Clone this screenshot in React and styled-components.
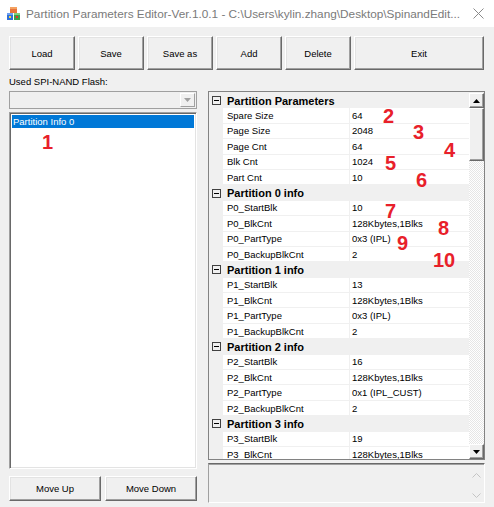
import React from "react";
import styled, { createGlobalStyle } from "styled-components";

const GlobalStyle = createGlobalStyle`
  html, body { margin: 0; padding: 0; background: #f0f0f0; }
  body { font-family: "Liberation Sans", Arial, sans-serif; }
  * { box-sizing: border-box; }
`;

const sections = [
  {
    title: "Partition Parameters",
    items: [
      ["Spare Size", "64"],
      ["Page Size", "2048"],
      ["Page Cnt", "64"],
      ["Blk Cnt", "1024"],
      ["Part Cnt", "10"],
    ],
  },
  {
    title: "Partition 0 info",
    items: [
      ["P0_StartBlk", "10"],
      ["P0_BlkCnt", "128Kbytes,1Blks"],
      ["P0_PartType", "0x3 (IPL)"],
      ["P0_BackupBlkCnt", "2"],
    ],
  },
  {
    title: "Partition 1 info",
    items: [
      ["P1_StartBlk", "13"],
      ["P1_BlkCnt", "128Kbytes,1Blks"],
      ["P1_PartType", "0x3 (IPL)"],
      ["P1_BackupBlkCnt", "2"],
    ],
  },
  {
    title: "Partition 2 info",
    items: [
      ["P2_StartBlk", "16"],
      ["P2_BlkCnt", "128Kbytes,1Blks"],
      ["P2_PartType", "0x1 (IPL_CUST)"],
      ["P2_BackupBlkCnt", "2"],
    ],
  },
  {
    title: "Partition 3 info",
    items: [
      ["P3_StartBlk", "19"],
      ["P3_BlkCnt", "128Kbytes,1Blks"],
    ],
  },
];

const marks = [
  { n: "1", x: 42, y: 135 },
  { n: "2", x: 383, y: 109 },
  { n: "3", x: 413, y: 125 },
  { n: "4", x: 444, y: 143 },
  { n: "5", x: 385, y: 156 },
  { n: "6", x: 416, y: 173 },
  { n: "7", x: 385, y: 204 },
  { n: "8", x: 438, y: 221 },
  { n: "9", x: 397, y: 236 },
  { n: "10", x: 433, y: 253 },
];

function App() {
  return (
    <Window>
      <GlobalStyle />
      <TitleBar>
        <svg width="15" height="15" viewBox="0 0 15 15">
          <rect x="4" y="1" width="7" height="6" fill="#e8743b" />
          <rect x="4" y="1" width="7" height="2" fill="#f4a261" />
          <rect x="1" y="7" width="6" height="7" fill="#2f6fd6" />
          <rect x="1" y="7" width="6" height="2" fill="#6fa0f0" />
          <rect x="8" y="7" width="6" height="7" fill="#3aa04a" />
          <rect x="8" y="7" width="6" height="2" fill="#7fd07f" />
          <rect x="3" y="10" width="2" height="2" fill="#f5d33b" />
          <rect x="10" y="10" width="2" height="2" fill="#e03030" />
        </svg>
        <TitleText>
          Partition Parameters Editor-Ver.1.0.1 - C:\Users\kylin.zhang\Desktop\SpinandEdit...
        </TitleText>
        <svg width="11" height="11" viewBox="0 0 11 11">
          <path d="M0.5 0.5 L10.5 10.5 M10.5 0.5 L0.5 10.5" stroke="#8a8a8a" strokeWidth="1" />
        </svg>
      </TitleBar>

      <Toolbar>
        <Button>Load</Button>
        <Button>Save</Button>
        <Button>Save as</Button>
        <Button>Add</Button>
        <Button>Delete</Button>
        <Button>Exit</Button>
      </Toolbar>

      <Main>
        <Label>Used SPI-NAND Flash:</Label>
        <LeftPane>
          <Combo>
            <ComboArrow>
              <svg width="7" height="4" viewBox="0 0 7 4">
                <path d="M0 0 H7 L3.5 4 Z" fill="#a0a0a0" />
              </svg>
            </ComboArrow>
          </Combo>
          <ListBox>
            <ListItem $selected>Partition Info 0</ListItem>
          </ListBox>
          <BottomButtons>
            <Button>Move Up</Button>
            <Button>Move Down</Button>
          </BottomButtons>
        </LeftPane>

        <RightPane>
          <PropGrid>
            <Rows>
              {sections.map((s) => (
                <React.Fragment key={s.title}>
                  <CategoryRow>
                    <Toggle />
                    {s.title}
                  </CategoryRow>
                  {s.items.map(([name, value]) => (
                    <PropRow key={name}>
                      <Margin />
                      <NameCell>{name}</NameCell>
                      <ValueCell>{value}</ValueCell>
                    </PropRow>
                  ))}
                </React.Fragment>
              ))}
            </Rows>
            <ScrollBar>
              <ScrollButton>
                <svg width="7" height="4" viewBox="0 0 7 4">
                  <path d="M0 4 H7 L3.5 0 Z" fill="#000" />
                </svg>
              </ScrollButton>
              <Thumb />
              <Track />
              <ScrollButton>
                <svg width="7" height="4" viewBox="0 0 7 4">
                  <path d="M0 0 H7 L3.5 4 Z" fill="#000" />
                </svg>
              </ScrollButton>
            </ScrollBar>
          </PropGrid>
          <Description>
            <DescScroll>
              <svg width="9" height="5" viewBox="0 0 9 5">
                <path d="M0.5 4.5 L4.5 0.5 L8.5 4.5" stroke="#c4c4c4" fill="none" />
              </svg>
              <svg width="9" height="5" viewBox="0 0 9 5">
                <path d="M0.5 0.5 L4.5 4.5 L8.5 0.5" stroke="#c4c4c4" fill="none" />
              </svg>
            </DescScroll>
          </Description>
        </RightPane>
      </Main>

      {marks.map((m) => (
        <Mark key={m.n} style={{ left: m.x, top: m.y - 3 }}>
          {m.n}
        </Mark>
      ))}
    </Window>
  );
}

export default App;

const Window = styled.div`
  position: relative;
  width: 494px;
  height: 507px;
  background: #f0f0f0;
  overflow: hidden;
  display: flex;
  flex-direction: column;
`;

const TitleBar = styled.div`
  height: 27px;
  background: #fff;
  display: flex;
  align-items: center;
  padding: 0 10px 0 6px;
  flex-shrink: 0;
`;

const TitleText = styled.div`
  flex: 1;
  margin-left: 5px;
  font-family: "Liberation Sans", Arial, sans-serif;
  font-size: 11.8px;
  color: #7a7a7a;
  white-space: nowrap;
  overflow: hidden;
`;

const Toolbar = styled.div`
  display: grid;
  grid-template-columns: repeat(5, 66px) 1fr;
  gap: 3px;
  padding: 9px 10px 0 9px;
  height: 43px;
  flex-shrink: 0;
`;

const Button = styled.button`
  margin: 0;
  padding: 0;
  background: #f0f0f0;
  border: 1px solid;
  border-color: #fff #696969 #696969 #fff;
  box-shadow: inset -1px -1px #a0a0a0, inset 1px 1px #e3e3e3;
  font-family: "Liberation Sans", Arial, sans-serif;
  font-size: 9.5px;
  color: #000;
`;

const Main = styled.div`
  display: grid;
  grid-template-columns: 188px 277px;
  grid-template-rows: 21px auto;
  column-gap: 11px;
  padding-left: 9px;
`;

const Label = styled.div`
  grid-column: 1 / 3;
  font-size: 9.5px;
  padding-top: 6px;
  color: #000;
`;

const LeftPane = styled.div`
  display: flex;
  flex-direction: column;
`;

const Combo = styled.div`
  height: 18px;
  border: 1px solid #a0a0a0;
  background: #f0f0f0;
  display: flex;
  justify-content: flex-end;
  padding: 1px;
`;

const ComboArrow = styled.div`
  width: 15px;
  display: flex;
  align-items: center;
  justify-content: center;
  border: 1px solid;
  border-color: #fff #a0a0a0 #a0a0a0 #fff;
  background: #f0f0f0;
`;

const ListBox = styled.div`
  margin-top: 3px;
  height: 357px;
  background: #fff;
  border: 1px solid;
  border-color: #a0a0a0 #fff #fff #a0a0a0;
  box-shadow: inset 1px 1px #696969, inset -1px -1px #e3e3e3;
  padding: 2px;
`;

const ListItem = styled.div`
  height: 13px;
  line-height: 13px;
  padding-left: 1px;
  font-size: 9.5px;
  background: ${(p) => (p.$selected ? "#0078d7" : "transparent")};
  color: ${(p) => (p.$selected ? "#fff" : "#000")};
`;

const BottomButtons = styled.div`
  margin-top: 7px;
  height: 25px;
  display: grid;
  grid-template-columns: 92px 92px;
  gap: 4px;
`;

const RightPane = styled.div`
  display: flex;
  flex-direction: column;
  gap: 3px;
`;

const PropGrid = styled.div`
  height: 369px;
  border: 1px solid #828282;
  background: #f0f0f0;
  display: flex;
`;

const Rows = styled.div`
  flex: 1;
  overflow: hidden;
  padding-top: 1px;
`;

const CategoryRow = styled.div`
  height: 15.4px;
  display: flex;
  align-items: center;
  background: #f0f0f0;
  font-size: 11px;
  font-weight: bold;
  color: #000;
`;

const Toggle = styled.span`
  position: relative;
  width: 9px;
  height: 9px;
  border: 1px solid #404040;
  margin: 0 6px 0 3px;
  flex-shrink: 0;
  &::after {
    content: "";
    position: absolute;
    left: 1px;
    right: 1px;
    top: 3px;
    height: 1px;
    background: #000;
  }
`;

const PropRow = styled.div`
  height: 15.4px;
  display: grid;
  grid-template-columns: 14px 127px 1fr;
  font-size: 9.5px;
  color: #000;
`;

const Margin = styled.div`
  background: #f0f0f0;
`;

const NameCell = styled.div`
  background: #fff;
  padding-left: 4px;
  border-right: 1px solid #f0f0f0;
  border-bottom: 1px solid #f0f0f0;
  display: flex;
  align-items: center;
  white-space: nowrap;
`;

const ValueCell = styled.div`
  background: #fff;
  padding-left: 2px;
  border-bottom: 1px solid #f0f0f0;
  display: flex;
  align-items: center;
  white-space: nowrap;
`;

const ScrollBar = styled.div`
  width: 15px;
  display: flex;
  flex-direction: column;
  padding-top: 1px;
`;

const ScrollButton = styled.div`
  height: 15px;
  display: flex;
  align-items: center;
  justify-content: center;
  background: #f0f0f0;
  border: 1px solid;
  border-color: #fff #696969 #696969 #fff;
  box-shadow: inset -1px -1px #a0a0a0;
  flex-shrink: 0;
`;

const Thumb = styled(ScrollButton)`
  height: 53px;
`;

const Track = styled.div`
  flex: 1;
  background-color: #fff;
  background-image: conic-gradient(#fff 25%, #e6e6e6 0 50%, #fff 0 75%, #e6e6e6 0);
  background-size: 2px 2px;
`;

const Description = styled.div`
  height: 40px;
  border: 1px solid;
  border-color: #696969 #fff #fff #a0a0a0;
  box-shadow: inset 0 1px #a0a0a0;
  background: #f0f0f0;
  display: flex;
  justify-content: flex-end;
`;

const DescScroll = styled.div`
  width: 16px;
  display: flex;
  flex-direction: column;
  align-items: center;
  justify-content: space-between;
  padding: 9px 0 4px;
`;

const Mark = styled.div`
  position: absolute;
  font-family: "Liberation Sans", Arial, sans-serif;
  font-weight: bold;
  font-size: 20px;
  line-height: 20px;
  color: #e8202a;
`;
